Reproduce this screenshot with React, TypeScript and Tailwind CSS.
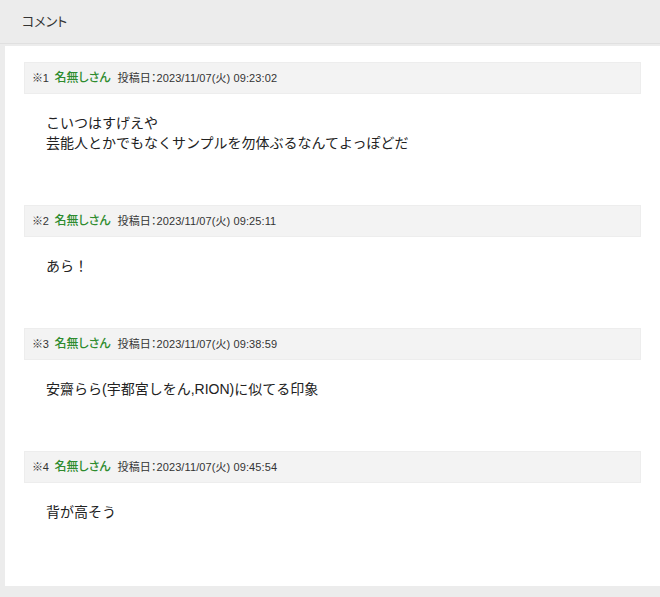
import React from "react";

type C = { no: number; date: string; lines: string[] };

const comments: C[] = [
  { no: 1, date: "2023/11/07(火) 09:23:02", lines: ["こいつはすげえや", "芸能人とかでもなくサンプルを勿体ぶるなんてよっぽどだ"] },
  { no: 2, date: "2023/11/07(火) 09:25:11", lines: ["あら！"] },
  { no: 3, date: "2023/11/07(火) 09:38:59", lines: ["安齋らら(宇都宮しをん,RION)に似てる印象"] },
  { no: 4, date: "2023/11/07(火) 09:45:54", lines: ["背が高そう"] },
];

export default function App() {
  return (
    <div
      className="w-[660px] h-[597px] bg-[#ececec] overflow-hidden text-[#333]"
      style={{ fontFamily: '"Liberation Sans", "Noto Sans CJK JP", sans-serif' }}
    >
      <div className="h-[43px] flex items-center pl-[22px] text-[13px] text-[#333] [font-feature-settings:'palt']">コメント</div>
      <div className="h-px bg-[#e0e0e0]" />
      <div className="ml-[5px] mt-[2px] bg-white pt-[16px] pb-[12px] px-[19px]">
        {comments.map((c) => (
          <div key={c.no}>
            <div className="h-[32px] bg-[#f3f3f3] border border-[#ededed] flex items-center pl-[7px] text-[11px] [font-feature-settings:'palt']">
              <span className="tracking-[-0.3px]">※{c.no}</span>
              <span className="ml-[6px] text-[12px] text-[#2e8b2e] font-medium">名無しさん</span>
              <span className="ml-[7px] tracking-[0.1px]">投稿日：{c.date}</span>
            </div>
            <div className="pt-[19px] pb-[52px] pl-[22px] text-[14px] leading-[20px] text-[#222]">
              {c.lines.map((l, i) => (
                <div key={i}>{l}</div>
              ))}
            </div>
          </div>
        ))}
      </div>
    </div>
  );
}
